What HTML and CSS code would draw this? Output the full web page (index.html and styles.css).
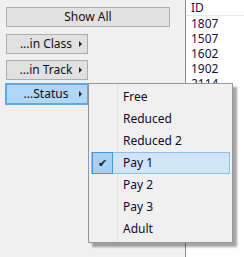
FILE: index.html
```html
<!DOCTYPE html>
<html>
<head>
	<title>Filter</title>
	<link rel="stylesheet" href="styles.css">
</head>
<body>
	<div class="window">
		<div class="filters">
			<div class="btn wide">Show All</div>
			<div class="btn sub first">...in Class<span class="arrow"></span></div>
			<div class="btn sub second">...in Track<span class="arrow"></span></div>
			<div class="btn sub active">...Status<span class="arrow"></span></div>
		</div>
		<div class="grid">
			<div class="head">ID</div>
			<div class="cell">1807</div>
			<div class="cell">1507</div>
			<div class="cell">1602</div>
			<div class="cell">1902</div>
			<div class="cell">2114</div>
			<div class="cell">1711</div>
			<div class="cell">1503</div>
			<div class="cell">1644</div>
			<div class="cell">1808</div>
			<div class="cell">2001</div>
			<div class="cell">1522</div>
			<div class="cell">1906</div>
			<div class="cell">1710</div>
			<div class="cell">2013</div>
			<div class="cell">1827</div>
		</div>
		<div class="menu">
			<div class="item">Free</div>
			<div class="item">Reduced</div>
			<div class="item">Reduced 2</div>
			<div class="item checked"><span class="tick">&#10004;</span>Pay 1</div>
			<div class="item">Pay 2</div>
			<div class="item">Pay 3</div>
			<div class="item">Adult</div>
		</div>
	</div>
</body>
</html>
```
FILE: styles.css
```css
html, body {
	margin: 0;
	height: 100%;
}
body {
	background: #f0f0f0;
	font-family: "Noto Sans", "DejaVu Sans", sans-serif;
	font-size: 12px;
	color: #111;
}
.window {
	position: relative;
	display: flex;
	height: 257px;
	overflow: hidden;
}
.filters {
	width: 185px;
	padding-top: 7px;
	padding-left: 6px;
	box-sizing: border-box;
}
.btn {
	position: relative;
	box-sizing: border-box;
	height: 20px;
	line-height: 17px;
	border: 1px solid #adadad;
	background: #e1e1e1;
	text-align: center;
}
.wide {
	width: 164px;
}
.sub {
	width: 82px;
	padding-right: 2px;
}
.first {
	margin-top: 7px;
}
.second {
	margin-top: 6px;
}
.active {
	margin-top: 3px;
	margin-left: -1px;
	width: 84px;
	height: 22px;
	line-height: 18px;
	border: 2px solid #62a6e6;
	background: #b0d6fa;
}
.arrow {
	position: absolute;
	right: 5px;
	top: 6px;
	width: 0;
	height: 0;
	border-top: 3px solid transparent;
	border-bottom: 3px solid transparent;
	border-left: 3px solid #222;
}
.grid {
	flex: 1;
	background: #fff;
	border-left: 1px solid #8c8c8c;
	color: #1c0f45;
}
.head {
	height: 15px;
	line-height: 15px;
	padding-left: 5px;
	border-bottom: 1px solid #e3ecf6;
}
.cell {
	height: 15px;
	line-height: 15px;
	padding-left: 5px;
}
.menu {
	position: absolute;
	left: 88px;
	top: 83px;
	width: 145px;
	box-sizing: border-box;
	padding: 2px;
	border: 1px solid #979797;
	box-shadow: 4px 4px 2px rgba(0, 0, 0, 0.35);
	background-color: #f0f0f0;
	background-image: linear-gradient(#e3e3e3, #e3e3e3);
	background-size: 1px 100%;
	background-position: 28px 0;
	background-repeat: no-repeat;
}
.item {
	position: relative;
	height: 22px;
	line-height: 21px;
	padding-left: 32px;
	color: #0d0b2a;
}
.checked {
	background: #d1e5f7;
	outline: 1px solid #8cc0ee;
	outline-offset: -1px;
}
.tick {
	position: absolute;
	left: 1px;
	top: 0;
	width: 21px;
	height: 22px;
	box-sizing: border-box;
	border: 1px solid #3d9be0;
	background: #a9d0f2;
	text-align: center;
	font-family: "DejaVu Sans", sans-serif;
	font-size: 11px;
	color: #222;
}
```
